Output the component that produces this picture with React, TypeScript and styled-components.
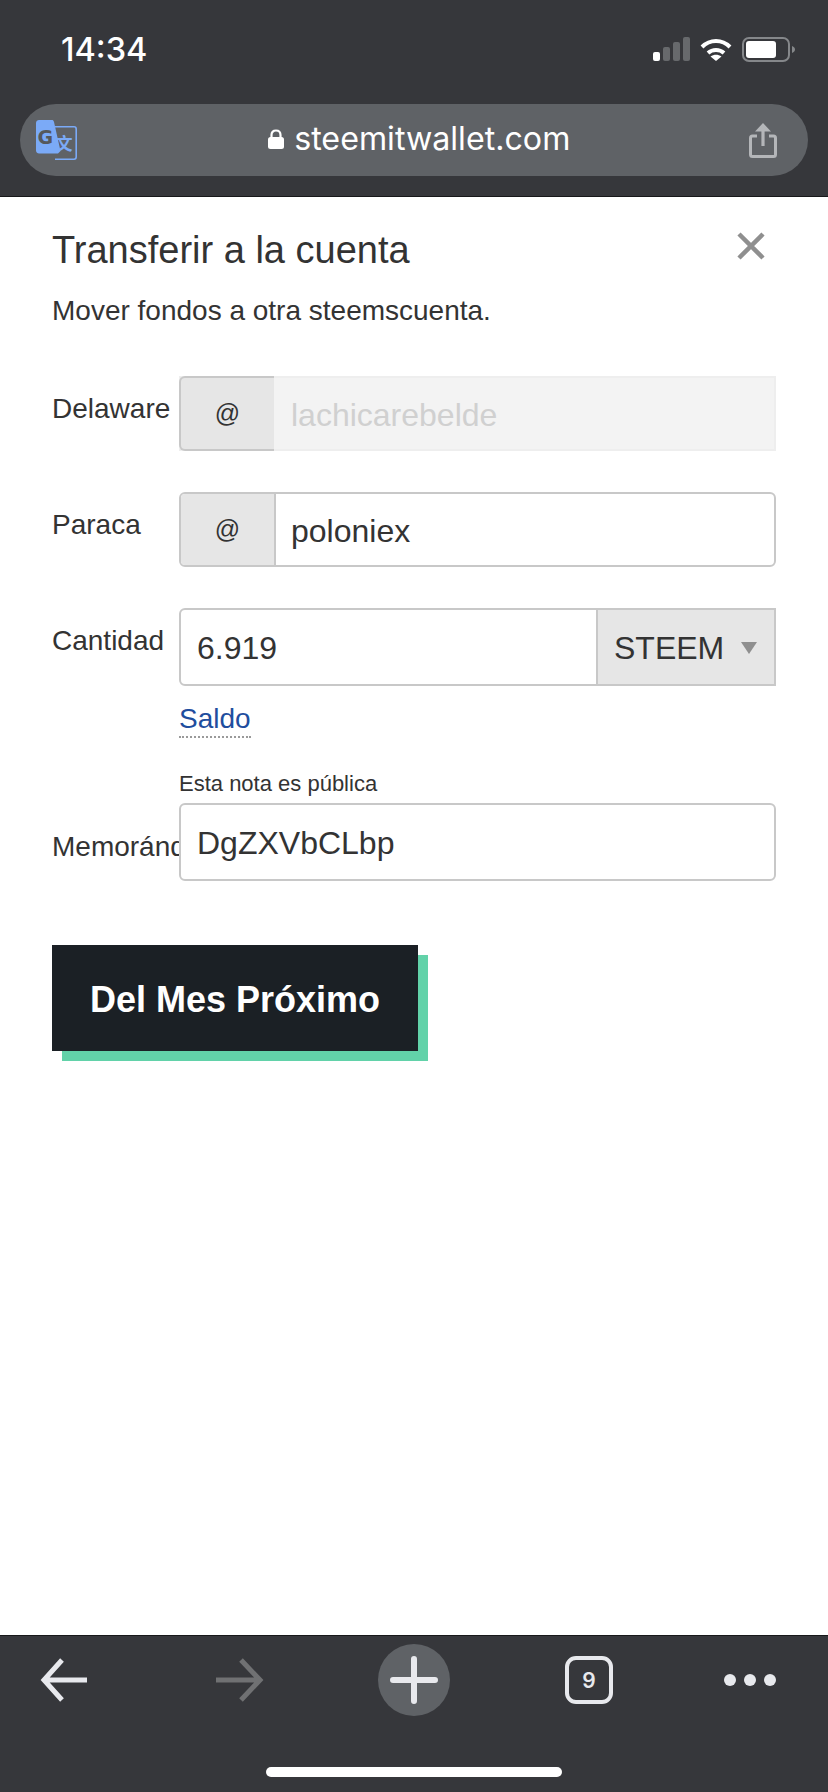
import React from "react";
import styled, { createGlobalStyle } from "styled-components";

const GlobalStyle = createGlobalStyle`
  html, body {
    margin: 0;
    padding: 0;
    background: #fff;
  }
  * {
    box-sizing: border-box;
  }
`;

const SignalBars = () => (
  <svg width="37" height="24" viewBox="0 0 37 24">
    <rect x="0" y="15" width="7" height="9" rx="2" fill="#fff" />
    <rect x="10" y="10" width="7" height="14" rx="2" fill="#67696c" />
    <rect x="20" y="5" width="7" height="19" rx="2" fill="#67696c" />
    <rect x="30" y="0" width="7" height="24" rx="2" fill="#67696c" />
  </svg>
);

const WifiIcon = () => (
  <svg width="32" height="24" viewBox="0 0 32 24">
    <path d="M2 10C10 2 22 2 30 10" fill="none" stroke="#fff" strokeWidth="4" />
    <path d="M8 16C12.5 12 19.5 12 24 16" fill="none" stroke="#fff" strokeWidth="4" />
    <path d="M16 24L10.5 19.5C14 17 18 17 21.5 19.5Z" fill="#fff" />
  </svg>
);

const BatteryIcon = () => (
  <svg width="53" height="25" viewBox="0 0 53 25">
    <rect x="1" y="1" width="46" height="23" rx="6" fill="none" stroke="#85878a" strokeWidth="2" />
    <rect x="4" y="4" width="30" height="17" rx="3" fill="#fff" />
    <path d="M50 9C52 10 53 11 53 12.5C53 14 52 15 50 16Z" fill="#85878a" />
  </svg>
);

const TranslateIcon = () => (
  <svg width="42" height="42" viewBox="0 0 42 42">
    <path
      d="M19 7.800H38C39.500 7.800 40.200 8.500 40.200 10V38C40.200 39.500 39.500 40.200 38 40.200H19"
      fill="#5f6266"
      stroke="#7baaf7"
      strokeWidth="1.600"
    />
    <path
      d="M3 1H16C17 1 17.500 1.500 18 3L24.500 32L22 34.500H3C1.500 34.500 0 33.500 0 31.500V4C0 2 1.500 1 3 1Z"
      fill="#7baaf7"
    />
    <text x="1.500" y="25" fontFamily="'DejaVu Sans', sans-serif" fontWeight="700" fontSize="19" fill="#55585c">
      G
    </text>
    <text x="19.500" y="31" fontFamily="'Noto Sans CJK SC', sans-serif" fontWeight="700" fontSize="17" fill="#7baaf7">
      文
    </text>
  </svg>
);

const LockIcon = () => (
  <svg width="16" height="20" viewBox="0 0 16 20">
    <path d="M3.500 9V6C3.500 3 5.500 1.500 8 1.500S12.500 3 12.500 6V9" fill="none" stroke="#fff" strokeWidth="2.200" />
    <rect x="0" y="8" width="16" height="12" rx="2.500" fill="#fff" />
  </svg>
);

const ShareIcon = () => (
  <svg width="28" height="36" viewBox="0 0 28 36">
    <path
      d="M8 14H3.500C2 14 1.500 14.500 1.500 16V32.500C1.500 34 2 34.500 3.500 34.500H24.500C26 34.500 26.500 34 26.500 32.500V16C26.500 14.500 26 14 24.500 14H20"
      fill="none"
      stroke="#b4b6b9"
      strokeWidth="3"
    />
    <path d="M14 24V4" fill="none" stroke="#b4b6b9" strokeWidth="3.200" />
    <path d="M6 9.500L14 1L22 9.500Z" fill="#b4b6b9" />
  </svg>
);

const CloseIcon = () => (
  <svg width="28" height="28" viewBox="0 0 28 28">
    <path d="M2 2L26 26M26 2L2 26" fill="none" stroke="#8f8f8f" strokeWidth="4.500" />
  </svg>
);

const ArrowLeft = ({ color }: { color: string }) => (
  <svg width="50" height="44" viewBox="0 0 50 44">
    <path d="M48 22H5M23 2L5 22L23 42" fill="none" stroke={color} strokeWidth="5" />
  </svg>
);

const ArrowRight = ({ color }: { color: string }) => (
  <svg width="50" height="44" viewBox="0 0 50 44">
    <path d="M2 22H46M27 2L46 22L27 42" fill="none" stroke={color} strokeWidth="5" />
  </svg>
);

const PlusIcon = () => (
  <svg width="48" height="48" viewBox="0 0 48 48">
    <path d="M3 24H45M24 3V45" fill="none" stroke="#e8e9ed" strokeWidth="6" strokeLinecap="round" />
  </svg>
);

const App = () => {
  return (
    <Screen>
      <GlobalStyle />
      <TopChrome>
        <StatusBar>
          <Clock>14:34</Clock>
          <StatusIcons>
            <SignalBars />
            <WifiIcon />
            <BatteryIcon />
          </StatusIcons>
        </StatusBar>
        <UrlBar>
          <TranslateIcon />
          <Address>
            <LockIcon />
            <span>steemitwallet.com</span>
          </Address>
          <ShareIcon />
        </UrlBar>
      </TopChrome>

      <Page>
        <TitleRow>
          <Title>Transferir a la cuenta</Title>
          <CloseButton>
            <CloseIcon />
          </CloseButton>
        </TitleRow>
        <Subtitle>Mover fondos a otra steemscuenta.</Subtitle>

        <FormRow $top={49}>
          <Label>Delaware</Label>
          <InputGroup $disabled>
            <Prefix $disabled>@</Prefix>
            <Field $disabled>lachicarebelde</Field>
          </InputGroup>
        </FormRow>

        <FormRow $top={41}>
          <Label>Paraca</Label>
          <InputGroup>
            <Prefix>@</Prefix>
            <Field>poloniex</Field>
          </InputGroup>
        </FormRow>

        <FormRow $top={41}>
          <Label>Cantidad</Label>
          <AmountGroup>
            <AmountField>6.919</AmountField>
            <AssetSelect>
              STEEM
              <Caret />
            </AssetSelect>
          </AmountGroup>
        </FormRow>

        <BalanceRow>
          <BalanceLink>Saldo</BalanceLink>
        </BalanceRow>

        <MemoHint>Esta nota es pública</MemoHint>
        <MemoRow>
          <MemoLabel>Memorándum</MemoLabel>
          <MemoField>DgZXVbCLbp</MemoField>
        </MemoRow>

        <SubmitButton>Del Mes Próximo</SubmitButton>
      </Page>

      <BottomBar>
        <Toolbar>
          <ToolSlot>
            <ArrowLeft color="#e8e9ed" />
          </ToolSlot>
          <ToolSlot>
            <ArrowRight color="#707173" />
          </ToolSlot>
          <PlusSlot>
            <PlusIcon />
          </PlusSlot>
          <ToolSlot>
            <TabCount>9</TabCount>
          </ToolSlot>
          <MenuSlot>
            <Dot />
            <Dot />
            <Dot />
          </MenuSlot>
        </Toolbar>
        <HomeIndicator />
      </BottomBar>
    </Screen>
  );
};

export default App;

const Screen = styled.div`
  width: 828px;
  height: 1792px;
  display: flex;
  flex-direction: column;
  overflow: hidden;
  background: #fff;
  font-family: "Liberation Sans", Arial, sans-serif;
  color: #333;
`;

const TopChrome = styled.header`
  height: 197px;
  flex: none;
  background: #36373b;
  border-bottom: 1px solid #17181a;
`;

const StatusBar = styled.div`
  height: 104px;
  display: flex;
  justify-content: space-between;
  padding: 37px 33px 0 61px;
`;

const Clock = styled.div`
  font-family: Inter, sans-serif;
  font-size: 32.5px;
  line-height: 26px;
  font-weight: 500;
  color: #fff;
`;

const StatusIcons = styled.div`
  display: flex;
  align-items: flex-start;
  gap: 10px;
`;

const UrlBar = styled.div`
  height: 72px;
  margin: 0 20px;
  padding: 0 31px 0 16px;
  display: flex;
  align-items: center;
  justify-content: space-between;
  border-radius: 36px;
  background: #5f6266;
`;

const Address = styled.div`
  display: flex;
  align-items: center;
  gap: 10.5px;
  margin-left: 11px;
  padding-bottom: 3px;
  font-family: Inter, "Liberation Sans", sans-serif;
  font-size: 32.2px;
  line-height: 40px;
  color: #fff;
`;

const Page = styled.main`
  flex: 1;
  padding: 0 52px;
`;

const TitleRow = styled.div`
  display: flex;
  justify-content: space-between;
  align-items: flex-start;
  padding: 32px 11px 0 0;
  height: 72px;
`;

const Title = styled.h1`
  margin: 0;
  font-size: 38px;
  line-height: 42px;
  font-weight: 400;
  color: #333;
`;

const CloseButton = styled.span`
  display: block;
  margin-top: 3px;
  line-height: 0;
`;

const Subtitle = styled.p`
  margin: 26px 0 0;
  font-size: 28px;
  line-height: 32px;
  color: #333;
`;

const FormRow = styled.div<{ $top: number }>`
  display: grid;
  grid-template-columns: 127px 597px;
  margin-top: ${(p) => p.$top}px;
`;

const Label = styled.label`
  padding-top: 17px;
  font-size: 28px;
  line-height: 32px;
  white-space: nowrap;
  overflow: hidden;
  color: #333;
`;

const InputGroup = styled.div<{ $disabled?: boolean }>`
  height: 75px;
  display: flex;
  border: 2px solid ${(p) => (p.$disabled ? "#eeeeee" : "#c8c8c8")};
  border-radius: ${(p) => (p.$disabled ? "0" : "6px")};
  background: ${(p) => (p.$disabled ? "#f3f3f3" : "#fff")};
`;

const Prefix = styled.div<{ $disabled?: boolean }>`
  width: 95px;
  flex: none;
  margin: ${(p) => (p.$disabled ? "-2px 0 -2px -2px" : "0")};
  display: flex;
  align-items: center;
  justify-content: center;
  font-size: 25px;
  color: #333;
  background: #e6e6e6;
  border: ${(p) => (p.$disabled ? "2px solid #c8c8c8" : "0")};
  border-right: ${(p) => (p.$disabled ? "0" : "2px solid #c8c8c8")};
  border-radius: ${(p) => (p.$disabled ? "6px 0 0 6px" : "4px 0 0 4px")};
`;

const Field = styled.div<{ $disabled?: boolean }>`
  flex: 1;
  padding: ${(p) => (p.$disabled ? "4px 0 0 17px" : "4px 0 0 15px")};
  display: flex;
  align-items: center;
  font-size: 32px;
  color: ${(p) => (p.$disabled ? "#d0d0d0" : "#333")};
`;

const AmountGroup = styled.div`
  height: 78px;
  display: flex;
  border: 2px solid #c8c8c8;
  border-radius: 6px 0 0 6px;
`;

const AmountField = styled.div`
  flex: 1;
  padding: 2px 0 0 16px;
  display: flex;
  align-items: center;
  font-size: 32px;
  color: #333;
`;

const AssetSelect = styled.div`
  width: 178px;
  flex: none;
  padding: 2px 17px 0 16px;
  display: flex;
  align-items: center;
  justify-content: space-between;
  font-size: 32px;
  color: #333;
  background: #e6e6e6;
  border-left: 2px solid #c8c8c8;
`;

const Caret = styled.span`
  width: 0;
  height: 0;
  border-left: 8px solid transparent;
  border-right: 8px solid transparent;
  border-top: 12px solid #8f8f8f;
`;

const BalanceRow = styled.div`
  margin: 14px 0 0 127px;
  height: 38px;
`;

const BalanceLink = styled.a`
  display: inline-block;
  height: 38px;
  padding-top: 3px;
  font-size: 28px;
  line-height: 32px;
  color: #1f4e9e;
  border-bottom: 2px dotted #9a9a9a;
`;

const MemoHint = styled.div`
  margin: 33px 0 0 127px;
  font-size: 22px;
  line-height: 26px;
  color: #333;
`;

const MemoRow = styled.div`
  display: grid;
  grid-template-columns: 127px 597px;
  margin-top: 6px;
`;

const MemoLabel = styled(Label)`
  padding-top: 28px;
`;

const MemoField = styled.div`
  height: 78px;
  padding: 2px 0 0 16px;
  display: flex;
  align-items: center;
  border: 2px solid #c8c8c8;
  border-radius: 6px;
  font-size: 32px;
  color: #333;
`;

const SubmitButton = styled.button`
  display: block;
  width: 366px;
  height: 106px;
  margin-top: 64px;
  padding: 3px 0 0;
  border: 0;
  background: #1b2025;
  box-shadow: 10px 10px 0 #62d2a9;
  font-family: inherit;
  font-size: 36px;
  font-weight: 700;
  color: #fff;
`;

const BottomBar = styled.footer`
  height: 157px;
  flex: none;
  background: #36373b;
  border-top: 1px solid #17181a;
`;

const Toolbar = styled.div`
  height: 84px;
  padding: 8px 0 0 28px;
  display: flex;
  gap: 103px;
`;

const ToolSlot = styled.div`
  width: 72px;
  height: 72px;
  display: flex;
  align-items: center;
  justify-content: center;
`;

const PlusSlot = styled(ToolSlot)`
  border-radius: 50%;
  background: #5f6266;
`;

const MenuSlot = styled(ToolSlot)`
  margin-left: -14px;
  gap: 8px;
`;

const Dot = styled.span`
  width: 12px;
  height: 12px;
  border-radius: 50%;
  background: #e8e9ed;
`;

const TabCount = styled.div`
  width: 48px;
  height: 48px;
  display: flex;
  align-items: center;
  justify-content: center;
  border: 4px solid #e8e9ed;
  border-radius: 11px;
  font-family: Inter, sans-serif;
  font-size: 21px;
  font-weight: 600;
  color: #e8e9ed;
`;

const HomeIndicator = styled.div`
  width: 296px;
  height: 10px;
  margin: 47px auto 0;
  border-radius: 5px;
  background: #fff;
`;
